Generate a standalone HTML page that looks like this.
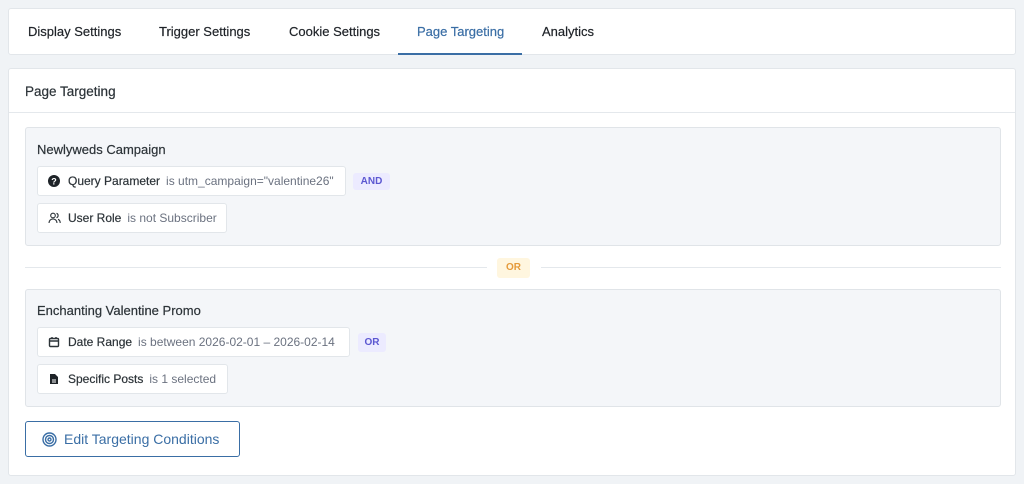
<!DOCTYPE html>
<html><head><style>
*{box-sizing:border-box;margin:0;padding:0}
body{width:1024px;height:484px;background:#f0f3f6;font-family:"Liberation Sans",sans-serif;color:#2c3338;position:relative;overflow:hidden}
.tabs{position:absolute;left:8px;top:8px;width:1008px;height:47px;background:#fff;border:1px solid #e2e6ea;border-radius:3px}
.tab{position:absolute;top:15px;font-size:13px;color:#1f2328;-webkit-text-stroke:0.2px #1f2328}
.tab.act{color:#3a6ea5;-webkit-text-stroke:0.2px #3a6ea5}
.ul{position:absolute;left:389px;top:44px;width:124px;height:2px;background:#3a6ea5}
.panel{position:absolute;left:8px;top:68px;width:1008px;height:408px;background:#fff;border:1px solid #e2e6ea;border-radius:3px}
.ph{position:absolute;left:16px;top:15px;font-size:13.5px;-webkit-text-stroke:0.2px #2c3338}
.hr{position:absolute;left:0;top:43px;width:100%;height:1px;background:#e4e8ec}
.grp{position:absolute;left:16px;width:976px;background:#f4f6f9;border:1px solid #e0e4e8;border-radius:3px}
.gt{position:absolute;left:11px;font-size:13px;color:#2c3338;-webkit-text-stroke:0.2px #2c3338}
.chip{position:absolute;left:11px;height:30px;background:#fff;border:1px solid #e2e6ea;border-radius:3px;font-size:12px;line-height:28px;padding-left:30px;white-space:nowrap}
.chip b{font-weight:normal;color:#2c3338;-webkit-text-stroke:0.2px #2c3338}
.chip span{color:#6b7280;margin-left:6px}
.chip svg{position:absolute;left:10px;top:8px}
.badge{position:absolute;height:17px;border-radius:3px;font-size:10px;font-weight:700;line-height:17px;text-align:center}
.bl{background:#ecebff;color:#5b57d1}
.line{position:absolute;top:198px;height:1px;background:#e4e8ec}
.btn{position:absolute;left:16px;top:352px;width:215px;height:36px;border:1px solid #3a6ea5;border-radius:3px;color:#3a6ea5;font-size:14px;line-height:34px;padding-left:38px}
.btn svg{position:absolute;left:16px;top:10px}
</style></head><body>
<div class="tabs">
<div class="tab" style="left:19px">Display Settings</div>
<div class="tab" style="left:150px">Trigger Settings</div>
<div class="tab" style="left:280px">Cookie Settings</div>
<div class="tab act" style="left:408px">Page Targeting</div>
<div class="tab" style="left:533px">Analytics</div>
<div class="ul"></div>
</div>
<div class="panel">
<div class="ph">Page Targeting</div>
<div class="hr"></div>
<div class="grp" style="top:58px;height:119px">
<div class="gt" style="top:14px">Newlyweds Campaign</div>
<div class="chip" style="top:38px;width:309px"><svg width="12" height="12" viewBox="0 0 12 12"><circle cx="6" cy="6" r="6" fill="#1e2328"/><text x="6" y="9.5" font-size="9" font-weight="700" fill="#fff" text-anchor="middle" font-family="Liberation Sans">?</text></svg><b>Query Parameter</b><span>is utm_campaign="valentine26"</span></div>
<div class="badge bl" style="left:327px;top:45px;width:37px">AND</div>
<div class="chip" style="top:75px;width:190px"><svg width="13" height="12" viewBox="0 0 13 12" fill="none" stroke="#2c3338" stroke-width="1.1"><circle cx="5" cy="3.5" r="2.3"/><path d="M1 11c0-2.5 1.8-4 4-4s4 1.5 4 4M8.5 1.3a2.3 2.3 0 010 4.4M10 7.3c1.3.5 2.2 1.8 2.2 3.7"/></svg><b>User Role</b><span>is not Subscriber</span></div>
</div>
<div class="line" style="left:16px;width:462px"></div>
<div class="line" style="left:532px;width:460px"></div>
<div class="badge" style="left:488px;top:189px;width:33px;height:20px;line-height:20px;background:#fff6df;color:#e59a3a">OR</div>
<div class="grp" style="top:220px;height:118px">
<div class="gt" style="top:13px">Enchanting Valentine Promo</div>
<div class="chip" style="top:37px;width:313px"><svg width="12" height="12" viewBox="0 0 12 12" fill="none" stroke="#2c3338" stroke-width="1.4"><rect x="1.5" y="2.5" width="9" height="8" rx="1"/><path d="M1.5 5h9M4 1v2M8 1v2"/></svg><b>Date Range</b><span>is between 2026-02-01 – 2026-02-14</span></div>
<div class="badge bl" style="left:332px;top:43px;width:28px;height:19px;line-height:19px">OR</div>
<div class="chip" style="top:74px;width:191px"><svg width="12" height="12" viewBox="0 0 12 12"><path d="M2 1h5l3 3v7H2z" fill="#1e2328"/><path d="M4 7h4M4 9h4" stroke="#fff" stroke-width="1"/></svg><b>Specific Posts</b><span>is 1 selected</span></div>
</div>
<div class="btn"><svg width="15" height="15" viewBox="0 0 15 15" fill="none" stroke="#3a6ea5" stroke-width="1.4"><circle cx="7.5" cy="7.5" r="6.5"/><circle cx="7.5" cy="7.5" r="4"/><circle cx="7.5" cy="7.5" r="1.5"/></svg>Edit Targeting Conditions</div>
</div>
</body></html>
